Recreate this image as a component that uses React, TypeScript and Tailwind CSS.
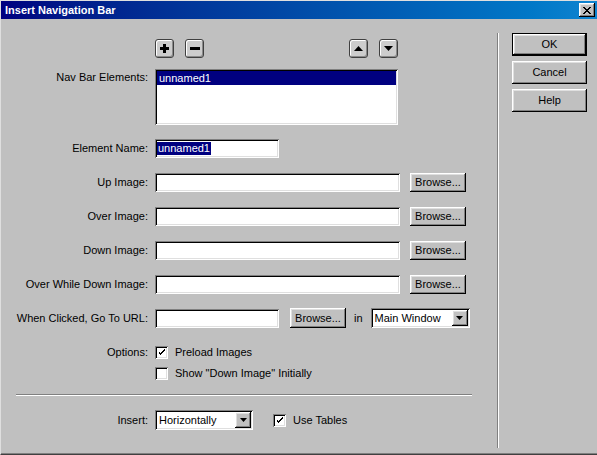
import React from 'react'

const raised =
  'shadow-[inset_-1px_-1px_0_#000,inset_1px_1px_0_#fff,inset_-2px_-2px_0_#808080,inset_2px_2px_0_#dfdfdf]'
const sunken =
  'shadow-[inset_1px_1px_0_#808080,inset_-1px_-1px_0_#fff,inset_2px_2px_0_#000,inset_-2px_-2px_0_#dfdfdf]'

const Arrow: React.FC = () => (
  <svg width="7" height="4" viewBox="0 0 7 4">
    <path d="M0 0h7L3.5 4z" fill="#000" />
  </svg>
)

const Check: React.FC = () => (
  <svg width="7" height="7" viewBox="0 0 7 7" shapeRendering="crispEdges">
    <path d="M0 2h1v3h1v1h1v-1h1v-1h1v-1h1v-1h1v-2h-1v1h-1v1h-1v1h-1v1h-1v-1h-1v-1z" fill="#000" />
  </svg>
)

const Checkbox: React.FC<{ checked?: boolean }> = ({ checked }) => (
  <div className={`w-[13px] h-[13px] bg-white flex items-center justify-center ${sunken}`}>
    {checked && <Check />}
  </div>
)

const Button: React.FC<{ children: React.ReactNode; className?: string }> = ({ children, className }) => (
  <div className={`bg-[#c0c0c0] flex items-center justify-center ${raised} ${className ?? ''}`}>{children}</div>
)

const Select: React.FC<{ value: string; className: string }> = ({ value, className }) => (
  <div className={`bg-white flex items-stretch p-[2px] ${sunken} ${className}`}>
    <div className="flex-1 flex items-center pl-[2px]">{value}</div>
    <div className={`w-[16px] bg-[#c0c0c0] flex items-center justify-center ${raised}`}>
      <Arrow />
    </div>
  </div>
)

const ImageButton: React.FC<{ children: React.ReactNode }> = ({ children }) => (
  <div className="w-[19px] h-[19px] rounded-[3px] border border-[#404040] bg-[#cdcdcd] shadow-[inset_1px_1px_0_#fff,inset_-1px_-1px_0_#8a8a8a] flex items-center justify-center">
    {children}
  </div>
)

const Row: React.FC<{ label: string; className?: string; children: React.ReactNode }> = ({
  label,
  className,
  children,
}) => (
  <div className={`flex items-center ${className ?? ''}`}>
    <div className="w-[147px] text-right">{label}</div>
    <div className="ml-[7px] flex items-center h-full">{children}</div>
  </div>
)

const ImageRow: React.FC<{ label: string }> = ({ label }) => (
  <Row label={label} className="h-[19px] mt-[15px]">
    <div className={`w-[245px] h-[19px] bg-white ${sunken}`} />
    <Button className="ml-[10px] w-[56px] h-[19px]">Browse...</Button>
  </Row>
)

export default function App() {
  return (
    <div className="w-[597px] h-[455px] overflow-hidden bg-[#c0c0c0] text-black text-[11px] leading-none font-['Liberation_Sans',Arial,sans-serif] border-t border-l border-[#dfdfdf] border-b border-b-[#404040] flex flex-col">
      {/* Title bar */}
      <div className="h-[18px] shrink-0 bg-gradient-to-r from-[#000080] to-[#1084d0] flex items-center justify-between pl-[4px] pr-[2px]">
        <span className="text-white font-bold text-[11px]">Insert Navigation Bar</span>
        <Button className="w-[16px] h-[14px]">
          <svg width="8" height="7" viewBox="0 0 8 7" shapeRendering="crispEdges">
            <path d="M0 0h2v1h1v1h2v-1h1v-1h2v1h-1v1h-1v1h-1v1h1v1h1v1h1v1h-2v-1h-1v-1h-2v1h-1v1h-2v-1h1v-1h1v-1h1v-1h-1v-1h-1v-1h-1z" fill="#000" />
          </svg>
        </Button>
      </div>

      {/* Body */}
      <div className="flex-1 flex border-b border-[#808080]">
        <div className="w-[496px] flex flex-col pt-[20px]">
          <Row label="" className="h-[19px]">
            <div className="w-[243px] flex justify-between">
              <div className="flex gap-[11px]">
                <ImageButton>
                  <svg width="9" height="9" viewBox="0 0 9 9" shapeRendering="crispEdges">
                    <path d="M3 0h3v3h3v3h-3v3h-3v-3h-3v-3h3z" fill="#000" />
                  </svg>
                </ImageButton>
                <ImageButton>
                  <svg width="10" height="3" viewBox="0 0 10 3" shapeRendering="crispEdges">
                    <path d="M0 0h10v3h-10z" fill="#000" />
                  </svg>
                </ImageButton>
              </div>
              <div className="flex gap-[11px]">
                <ImageButton>
                  <svg width="9" height="5" viewBox="0 0 9 5">
                    <path d="M4.5 0L9 5H0z" fill="#000" />
                  </svg>
                </ImageButton>
                <ImageButton>
                  <svg width="9" height="5" viewBox="0 0 9 5">
                    <path d="M0 0h9L4.5 5z" fill="#000" />
                  </svg>
                </ImageButton>
              </div>
            </div>
          </Row>

          <div className="flex items-start mt-[11px] h-[56px]">
            <div className="w-[147px] text-right pt-[3px]">Nav Bar Elements:</div>
            <div className={`ml-[7px] w-[243px] h-[56px] bg-white p-[2px] ${sunken}`}>
              <div className="h-[14px] bg-[#000080] text-white flex items-center pl-[2px]">unnamed1</div>
            </div>
          </div>

          <Row label="Element Name:" className="h-[19px] mt-[14px]">
            <div className={`w-[124px] h-[19px] bg-white flex items-center pl-[2px] ${sunken}`}>
              <span className="bg-[#000080] text-white h-[13px] flex items-center px-px">unnamed1</span>
            </div>
          </Row>

          <ImageRow label="Up Image:" />
          <ImageRow label="Over Image:" />
          <ImageRow label="Down Image:" />
          <ImageRow label="Over While Down Image:" />

          <Row label="When Clicked, Go To URL:" className="h-[20px] mt-[14px]">
            <div className={`w-[124px] h-[19px] bg-white ${sunken}`} />
            <Button className="ml-[11px] w-[56px] h-[20px]">Browse...</Button>
            <span className="ml-[8px]">in</span>
            <Select value="Main Window" className="ml-[8px] w-[99px] h-[20px]" />
          </Row>

          <Row label="Options:" className="h-[16px] mt-[16px]">
            <Checkbox checked />
            <span className="ml-[7px]">Preload Images</span>
          </Row>
          <Row label="" className="h-[16px] mt-[5px]">
            <Checkbox />
            <span className="ml-[7px]">Show "Down Image" Initially</span>
          </Row>

          <div className="ml-[15px] mt-[13px] w-[456px] h-[2px] border-t border-[#808080] border-b border-b-white" />

          <Row label="Insert:" className="h-[20px] mt-[14px]">
            <Select value="Horizontally" className="w-[98px] h-[20px]" />
            <div className="ml-[20px]">
              <Checkbox checked />
            </div>
            <span className="ml-[7px]">Use Tables</span>
          </Row>
        </div>

        {/* Vertical separator */}
        <div className="mt-[14px] h-[415px] w-[2px] border-l border-[#808080] border-r border-r-white" />

        {/* Buttons */}
        <div className="ml-[13px] mt-[14px] flex flex-col gap-[5px]">
          <div className="w-[75px] h-[23px] border border-black flex">
            <Button className="flex-1">OK</Button>
          </div>
          <Button className="w-[75px] h-[23px]">Cancel</Button>
          <Button className="w-[75px] h-[23px]">Help</Button>
        </div>
      </div>
    </div>
  )
}
